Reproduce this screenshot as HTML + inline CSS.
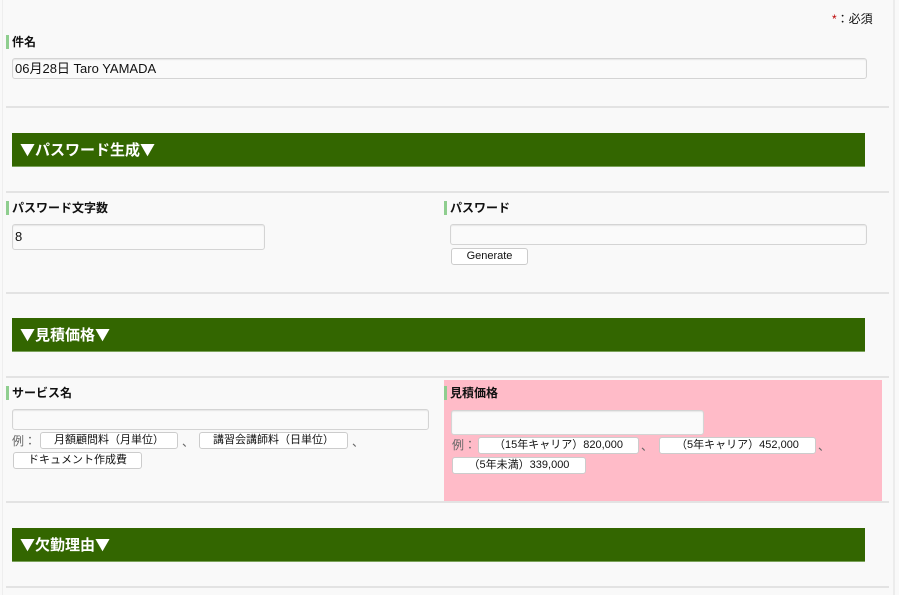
<!DOCTYPE html>
<html><head><meta charset="utf-8"><style>
*{margin:0;padding:0;box-sizing:border-box}
body{width:899px;height:595px;background:#f9f9f9;position:relative;overflow:hidden;font-family:"Liberation Sans","Noto Sans CJK JP",sans-serif;color:#111}
.a{position:absolute}
.vl{left:2px;top:0;width:1px;height:595px;background:#eee}
.vr{left:893px;top:0;width:2px;height:595px;background:#ececec}
.hr{left:6px;width:883px;height:2px;background:#e3e3e3}
.lb{font-size:12px;font-weight:bold;line-height:14px;padding-left:3px;border-left:3px solid #8fce8f}
.in{background:#fafafa;border:1px solid #d4d4d4;border-radius:3px;box-shadow:inset 0 1px 1px #e6e6e6;font-size:13px;padding-left:2px;line-height:19px}
.gb{left:12px;width:853px;height:34px;background:#336600;border-bottom:1px solid #7aa25a;color:#fff;font-weight:bold;font-size:15px;line-height:33px;padding-left:8px;font-family:"Noto Sans CJK JP",sans-serif}
.bt{background:#fff;border:1px solid #ccc;border-radius:3px;font-size:11px;text-align:center;line-height:15px;height:17px}
.ex{font-size:12px;color:#666;line-height:16px}
</style></head><body>
<div class="a vl"></div><div class="a vr"></div>
<div class="a" style="left:832px;top:10px;font-size:12px"><span style="color:#b00">*</span>：必須</div>
<div class="a lb" style="left:6px;top:35px">件名</div>
<div class="a in" style="left:12px;top:58px;width:855px;height:21px">06月28日 Taro YAMADA</div>
<div class="a hr" style="top:106px"></div>
<div class="a gb" style="top:133px">▼パスワード生成▼</div>
<div class="a hr" style="top:191px"></div>
<div class="a lb" style="left:6px;top:201px">パスワード文字数</div>
<div class="a lb" style="left:444px;top:201px">パスワード</div>
<div class="a in" style="left:12px;top:224px;width:253px;height:26px;line-height:24px">8</div>
<div class="a in" style="left:450px;top:224px;width:417px;height:21px"></div>
<div class="a bt" style="left:451px;top:248px;width:77px">Generate</div>
<div class="a hr" style="top:292px"></div>
<div class="a gb" style="top:318px">▼見積価格▼</div>
<div class="a hr" style="top:376px"></div>
<div class="a" style="left:444px;top:380px;width:438px;height:122px;background:#ffbbc8"></div>
<div class="a lb" style="left:6px;top:386px">サービス名</div>
<div class="a lb" style="left:444px;top:386px">見積価格</div>
<div class="a in" style="left:12px;top:409px;width:417px;height:21px"></div>
<div class="a ex" style="left:12px;top:433px">例：</div>
<div class="a bt" style="left:40px;top:432px;width:138px">月額顧問料（月単位）</div>
<div class="a ex" style="left:182px;top:434px">、</div>
<div class="a bt" style="left:199px;top:432px;width:149px">講習会講師料（日単位）</div>
<div class="a ex" style="left:352px;top:434px">、</div>
<div class="a bt" style="left:13px;top:452px;width:129px">ドキュメント作成費</div>
<div class="a in" style="left:451px;top:410px;width:253px;height:25px"></div>
<div class="a ex" style="left:452px;top:437px">例：</div>
<div class="a bt" style="left:478px;top:437px;width:161px">（15年キャリア）820,000</div>
<div class="a ex" style="left:641px;top:438px">、</div>
<div class="a bt" style="left:659px;top:437px;width:157px">（5年キャリア）452,000</div>
<div class="a ex" style="left:818px;top:438px">、</div>
<div class="a bt" style="left:452px;top:457px;width:134px">（5年未満）339,000</div>
<div class="a hr" style="top:501px"></div>
<div class="a gb" style="top:528px">▼欠勤理由▼</div>
<div class="a hr" style="top:586px"></div>
</body></html>
